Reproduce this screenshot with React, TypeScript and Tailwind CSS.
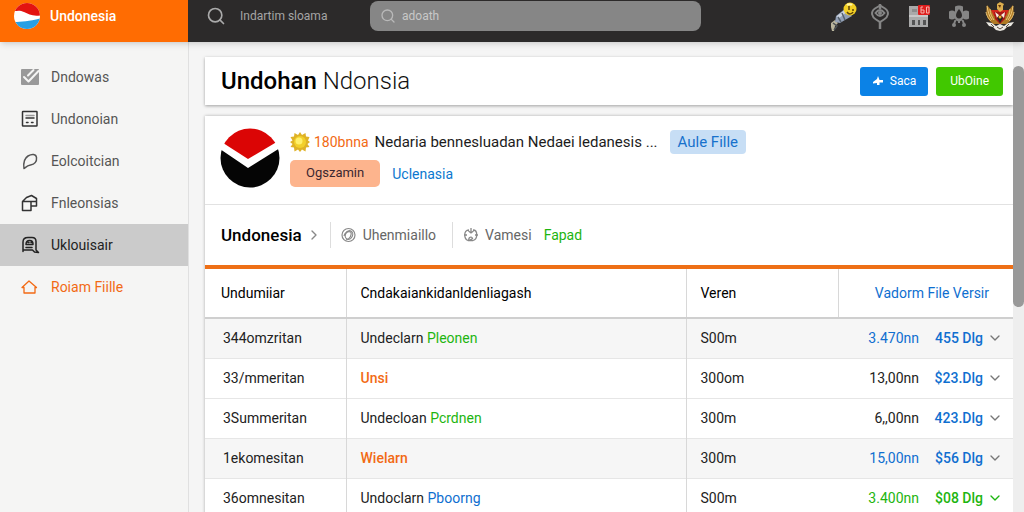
import { Search, ChevronDown, ChevronRight } from "lucide-react";

const navItems = [
  { label: "Dndowas", icon: "check" },
  { label: "Undonoian", icon: "form" },
  { label: "Eolcoitcian", icon: "leaf" },
  { label: "Fnleonsias", icon: "box" },
  { label: "Uklouisair", icon: "badge", active: true },
  { label: "Roiam Fiille", icon: "home", accent: true },
];

const rows = [
  { id: "344omzritan", name: "Undeclarn", tag: "Pleonen", tagColor: "text-[#1db510]", size: "S00m", amount: "3.470nn", amountColor: "text-[#0f6fd0]", price: "455 Dlg", shaded: true },
  { id: "33/mmeritan", name: "", tag: "Unsi", tagColor: "text-[#f26a14]", size: "300om", amount: "13,00nn", amountColor: "text-[#222]", price: "$23.Dlg" },
  { id: "3Summeritan", name: "Undecloan", tag: "Pcrdnen", tagColor: "text-[#1db510]", size: "300m", amount: "6,,00nn", amountColor: "text-[#222]", price: "423.Dlg" },
  { id: "1ekomesitan", name: "", tag: "Wielarn", tagColor: "text-[#f26a14]", size: "300m", amount: "15,00nn", amountColor: "text-[#0f6fd0]", price: "$56 Dlg", shaded: true },
  { id: "36omnesitan", name: "Undoclarn", tag: "Pboorng", tagColor: "text-[#0f6fd0]", size: "S00m", amount: "3.400nn", amountColor: "text-[#1db510]", price: "$08 Dlg", done: true },
];

function NavIcon({ name }: { name: string }) {
  return (
    <svg viewBox="0 0 20 20" className="w-5 h-5 shrink-0" fill="none" stroke="currentColor" strokeWidth="1.5" strokeLinejoin="round" strokeLinecap="round">
      {name === "check" && (
        <>
          <rect x="1" y="2" width="18" height="16" rx="1" fill="#999" stroke="none" />
          <path d="M4 10l4.500 4.500L18.500 4M8 8.500L13.500 3" stroke="#f5f5f4" strokeWidth="2" />
        </>
      )}
      {name === "form" && (
        <g stroke="#333">
          <rect x="2.500" y="2.500" width="14.500" height="14.500" rx="0.500" />
          <path d="M6 6.500h8" stroke="#999" />
          <path d="M6 9h8M6.500 13.500h1.500M11.500 13.500h1.500" />
        </g>
      )}
      {name === "leaf" && <path d="M4 17.500c-.8-5.500 0-10 4-12.500 4-2.300 8-2 8.500 1.500.5 4-2 7-6 7.500-3 .4-4 1.500-6.500 3.500z" />}
      {name === "box" && <path d="M2.500 8.500V17.500H11V13H16.500V5.500L11.500 2.500 6.500 4.500 2.500 8.500H16M11 8.500V13" stroke="#333" />}
      {name === "badge" && (
        <>
          <path d="M3 16.500V7c0-3 2-4.500 5-4.500h4c2.500 0 4 1.500 4 4v8.500l2.500 2.500-4-.5-2-2H3" />
          <path d="M6 9.500c0-3 1.500-4 3.500-4s3.500 1 3.500 3.500M6 9.500h7M6 12.500h6M8 7.500h1M11 7.500h1" />
        </>
      )}
      {name === "home" && <path d="M2 10.500L9 4l7.500 6.500H15V16H4v-5.500z" strokeWidth="1.300" />}
    </svg>
  );
}

function Flashlight() {
  return (
    <svg viewBox="0 0 30 30" className="w-[30px] h-[30px]">
      <path d="M3 22l4-3 3 3-3 3-1 5H4l-1-4z" fill="#b9b49c" />
      <path d="M5 22l4 3-3 4" fill="none" stroke="#4b5054" strokeWidth="1.500" />
      <path d="M8 15l10-8 6 8-7 4-5 3-5-1z" fill="#93a0b6" />
      <path d="M9 15l9-7 2 2-10 8z" fill="#ccd3df" />
      <path d="M14 12l3 7M10 16l3 5" stroke="#56616e" strokeWidth="1.500" />
      <circle cx="22" cy="8" r="6.500" fill="#f2cf24" />
      <path d="M19 4c1-1 4-1 5 0" stroke="#fff6a8" strokeWidth="2" fill="none" />
      <path d="M21 5v4M25 8v2M19 11c2 3 5 2 6 0" stroke="#5e4307" strokeWidth="1.500" fill="none" />
    </svg>
  );
}

function Pin() {
  return (
    <svg viewBox="0 0 20 26" className="w-5 h-[26px]" fill="none" stroke="#858585" strokeWidth="2">
      <path d="M10 2.500L5 5.500C0 9 2 14 6 16.500l4 2.500 4-2.500c4-2.500 6-7.500 1-11z" />
      <path d="M5.500 10q4.500-6 9 0-4.500 6-9 0z" />
      <circle cx="10" cy="10" r="1" fill="#858585" />
      <path d="M10 1v5M10 18v8" strokeWidth="2.500" />
    </svg>
  );
}

function Calendar() {
  return (
    <svg viewBox="0 0 24 26" className="w-6 h-[26px]">
      <path d="M1 3h19v21H1z" fill="#aaa" />
      <path d="M4 6h5v3H4z" fill="#8d8d8d" />
      <path d="M1 13h19" stroke="#c8c8c8" strokeWidth="2" />
      <path d="M4 17h3v5H4zM10 17h2v5h-2zM15 17h3v5h-3z" fill="#555" />
      <rect x="10" y="2" width="12" height="10" rx="1" fill="#df1d1d" />
      <path d="M15 4h-2v6h3V7h-3M18.500 4h2.500v6h-2.500z" fill="none" stroke="#f4b3ab" />
    </svg>
  );
}

function Cross() {
  return (
    <svg viewBox="0 0 22 26" className="w-[22px] h-[26px]" fill="#858585">
      <path d="M7 3.500q4-2 8 0v5q3-2 6 0v7q-3 2-6 0-1 3-4 3t-4-3q-3 2-6 0v-7q3-2 6 0z" />
      <path d="M11 6c4 5 4 9 0 9.500C7 15 7 11 11 6z" fill="#2c2a2a" />
      <path d="M7.500 17L6 21M14.500 17l1.500 4M11 17v3" stroke="#858585" strokeWidth="2" />
      <circle cx="6" cy="22" r="2" />
      <circle cx="16" cy="22" r="2" />
    </svg>
  );
}

function Emblem() {
  return (
    <svg viewBox="0 0 32 32" className="w-8 h-8">
      <path d="M3 5l5 6h16l5-6c1 6 1 11-2 15l-4 4H9l-4-4C2 16 2 11 3 5z" fill="#b07a25" />
      <path d="M3 6c1 6 2 10 5 14M6 9c0 5 2 8 4 11M29 6c-1 6-2 10-5 14M26 9c0 5-2 8-4 11M2 12c1 5 3 7 5 9M30 12c-1 5-3 7-5 9" stroke="#ecc97b" strokeWidth="1" fill="none" />
      <path d="M7 10h18l-3 6H10z" fill="#d3271c" />
      <path d="M13 4l3-2 4 2-1 2v4l-3 2-3-3z" fill="#dcae4e" />
      <path d="M14 5h3l-1 3z" fill="#623309" />
      <path d="M10 12h12l-1 7-5 5-5-5z" fill="#a81717" />
      <path d="M11 12l4 3-2 3zM21 12l-4 3 3 3z" fill="#f5eee0" />
      <path d="M13 18l3-3 3 3-3 5z" fill="#292321" />
      <circle cx="16" cy="17" r="1.500" fill="#f2b62f" />
      <path d="M2 22l6 1 4 3 4-2 4 2 4-3 6-1-3 4-4 1-3 3-4 1-4-1-3-3-4-1z" fill="#ece9e2" />
      <path d="M7 24l3 3M25 24l-3 3M13 27l3 2 3-2" stroke="#5b4c40" strokeWidth="1" fill="none" />
    </svg>
  );
}

function Sun() {
  return (
    <svg viewBox="0 0 20 20" className="w-5 h-5 shrink-0">
      <path
        d="M10 0l2 3 3.500-2 .5 3.500 3.500.5-1.500 3.500L20 10l-2.500 2 2 3-3.500.5-.5 4-3.500-2L10 20l-2-2.500-3.500 2L4 15.500.500 15l2-3L0 10l2.500-1.500L.5 5 4 4.500 4.500 1 8 3z"
        fill="#dfb226"
      />
      <circle cx="10" cy="10" r="6" fill="#f2d02a" />
      <circle cx="9" cy="9" r="3.500" fill="#fff06b" />
    </svg>
  );
}

function Header() {
  return (
    <header className="relative z-10 flex h-[42px] shrink-0 shadow-md">
      <a href="#" className="flex w-[188px] shrink-0 items-center gap-2 bg-[#ff6c02] pb-2.5 pl-3.5 text-sm font-medium text-white">
        <svg viewBox="0 0 28 28" className="h-7 w-7">
          <clipPath id="flag"><circle cx="13" cy="14" r="13" /></clipPath>
          <g clipPath="url(#flag)">
            <path d="M0 0h28v28H0z" fill="#fff" />
            <path d="M0 0h28v13c-9 2-13-1-18-3C6 8 3 9 0 9z" fill="#e31310" />
            <path d="M0 20c8 0 16-1 28-4v12H0z" fill="#279fe4" />
          </g>
        </svg>
        Undonesia
      </a>
      <div className="flex flex-1 items-center bg-[#2c2a2a] pb-2.5 pl-[18px] pr-2">
        <Search className="h-5 w-5 shrink-0 text-[#aaa]" strokeWidth={2} />
        <span className="ml-3.5 w-[130px] shrink-0 text-xs text-[#a5a5a5]">Indartim sloama</span>
        <label className="flex h-[30px] w-[331px] items-center gap-1.5 rounded-lg bg-[#868686] pl-2.5">
          <Search className="h-4 w-4 shrink-0 text-[#b9b9b9]" />
          <input type="text" aria-label="Search" placeholder="adoath" className="w-full bg-transparent text-xs text-[#d0d0d0] outline-none placeholder:text-[#c8c8c8]" />
        </label>
        <div className="ml-auto flex items-center">
          <button aria-label="Light" className="mr-3"><Flashlight /></button>
          <button aria-label="Location" className="mr-[18px]"><Pin /></button>
          <button aria-label="Calendar" className="mr-4"><Calendar /></button>
          <button aria-label="Services" className="mr-3.5"><Cross /></button>
          <button aria-label="Account"><Emblem /></button>
        </div>
      </div>
    </header>
  );
}

function Sidebar() {
  return (
    <nav className="w-[189px] shrink-0 border-r border-[#e0e0e0] bg-[#f5f5f4] pt-3.5">
      {navItems.map((item) => (
        <a
          key={item.label}
          href="#"
          className={`flex h-[42px] items-center gap-[11px] pl-5 text-sm ${
            item.active ? "bg-[#cbcbcb] text-[#222]" : item.accent ? "text-[#f26a14]" : "text-[#555]"
          }`}
        >
          <NavIcon name={item.icon} />
          {item.label}
        </a>
      ))}
    </nav>
  );
}

function Profile() {
  return (
    <div className="flex h-[89px] gap-2.5 border-b border-[#e2e2e2] pl-[15px] pt-3">
      <svg viewBox="0 0 60 60" className="h-[60px] w-[60px] shrink-0">
        <clipPath id="avatar"><circle cx="30" cy="30" r="29.500" /></clipPath>
        <g clipPath="url(#avatar)">
          <path d="M0 0h60v60H0z" fill="#fff" />
          <path d="M0 0h60v12L28 31 0 13z" fill="#db0505" />
          <path d="M0 21l28 19 32-20v40H0z" fill="#050505" />
        </g>
      </svg>
      <div className="flex flex-col gap-1">
        <div className="flex h-7 items-center text-[15px] text-[#1c1c1c]">
          <Sun />
          <span className="ml-1 text-sm text-[#f26a14]">180bnna</span>
          <span className="ml-1.5">Nedaria bennesluadan Nedaei ledanesis ...</span>
          <a href="#" className="ml-3 rounded-sm bg-[#c7def5] px-2 leading-6 text-[#1771cc]">Aule Fille</a>
        </div>
        <div className="flex items-center gap-3 text-sm">
          <button className="h-[27px] rounded-[5px] bg-[#fdb48d] px-4 text-[13px] text-[#3b2730]">Ogszamin</button>
          <a href="#" className="text-[#0c78cf]">Uclenasia</a>
        </div>
      </div>
    </div>
  );
}

function Crumbs() {
  return (
    <div className="flex h-[60px] items-center pl-4 text-sm text-[#666]">
      <a href="#" className="text-[17px] font-medium text-black">Undonesia</a>
      <ChevronRight className="ml-1 h-4 w-4 text-[#888]" />
      <a href="#" className="ml-2 flex h-[26px] items-center gap-1.5 border-l border-[#ddd] pl-2.5">
        <svg viewBox="0 0 16 16" className="h-4 w-4" fill="none" stroke="#888" strokeWidth="1.200">
          <circle cx="7.500" cy="8" r="6.500" />
          <ellipse cx="8" cy="8" rx="3.500" ry="4.500" transform="rotate(25 8 8)" />
          <path d="M5 13c4-1 6-5 5-8M3 9c1-4 4-5 7-4" />
        </svg>
        Uhenmiaillo
      </a>
      <a href="#" className="ml-4 flex h-[26px] items-center gap-1.5 border-l border-[#ddd] pl-2.5">
        <svg viewBox="0 0 16 16" className="h-4 w-4" fill="none" stroke="#888" strokeWidth="1.300">
          <path d="M6 3C0 3 1 12 5 13.500h5C15 12 15 3 10 3M8 1v5M5.500 4L8 6l2.500-2M1 8h3M12 8h3M6 13.500C5 10 9 9 9.500 11.500L7 13" />
        </svg>
        Vamesi
      </a>
      <a href="#" className="ml-3 text-[#1db510]">Fapad</a>
    </div>
  );
}

function FileTable() {
  return (
    <table className="w-full table-fixed border-t-4 border-[#ee6f16] text-left text-sm text-[#222]">
      <colgroup>
        <col className="w-[141px]" />
        <col />
        <col className="w-[152px]" />
        <col className="w-[175px]" />
      </colgroup>
      <thead>
        <tr className="h-[51px] border-b-2 border-[#cfcfcf] text-black">
          <th className="border-r border-[#d8d8d8] pl-4 font-normal">Undumiiar</th>
          <th className="border-r border-[#d8d8d8] pl-3.5 font-normal">Cndakaiankidanldenliagash</th>
          <th className="border-r border-[#d8d8d8] pl-3.5 font-normal">Veren</th>
          <th className="pr-6 text-right font-normal text-[#0f6fd0]">Vadorm File Versir</th>
        </tr>
      </thead>
      <tbody>
        {rows.map((row) => (
          <tr key={row.id} className={`h-10 border-b border-[#e6e6e6] ${row.shaded ? "bg-[#f6f6f6]" : "bg-white"}`}>
            <td className="border-r border-[#d8d8d8] pl-[18px]">{row.id}</td>
            <td className="border-r border-[#d8d8d8] pl-3.5">
              {row.name} <span className={row.name ? row.tagColor : `font-medium ${row.tagColor}`}>{row.tag}</span>
            </td>
            <td className="pl-3.5">{row.size}</td>
            <td>
              <div className="flex items-center justify-end pr-2.5">
                <span className={row.amountColor}>{row.amount}</span>
                <span className={`w-16 text-right font-medium ${row.done ? "text-[#1db510]" : "text-[#0f6fd0]"}`}>{row.price}</span>
                <button aria-label={`Expand ${row.id}`} className="ml-1">
                  <ChevronDown className={`h-4 w-4 ${row.done ? "text-[#1db510]" : "text-[#777]"}`} />
                </button>
              </div>
            </td>
          </tr>
        ))}
      </tbody>
    </table>
  );
}

export default function App() {
  return (
    <div className="flex h-screen flex-col overflow-hidden bg-[#f5f5f5] font-['Roboto',sans-serif]">
      <Header />
      <div className="flex min-h-0 flex-1">
        <Sidebar />
        <main className="flex min-w-0 flex-1 flex-col gap-[11px] overflow-hidden pl-4 pt-[15px]">
          <div className="flex h-12 shrink-0 items-center bg-white pl-4 pr-2.5 shadow-[0_1px_3px_rgba(0,0,0,0.35)]">
            <h1 className="text-2xl font-light text-[#111]">
              <span className="font-medium text-black">Undohan</span> Ndonsia
            </h1>
            <div className="ml-auto flex gap-2 text-xs text-white">
              <button className="flex h-[29px] items-center gap-1.5 rounded-[3px] bg-[#0b82e6] px-3">
                <svg viewBox="0 0 12 12" className="h-3 w-3" fill="currentColor">
                  <path d="M6 1l1.500 4H11v2.500H7.500V10H5V8L1 8.500V7l4-3z" />
                </svg>
                Saca
              </button>
              <button className="h-[29px] rounded-[3px] bg-[#41c800] px-3.5">UbOine</button>
            </div>
          </div>
          <section className="shrink-0 bg-white shadow-[0_0_3px_rgba(0,0,0,0.3)]">
            <Profile />
            <Crumbs />
            <FileTable />
          </section>
        </main>
        <div className="w-[11px] shrink-0 bg-[#eee] pt-6">
          <div className="h-[54%] rounded-md bg-[#999]" />
        </div>
      </div>
    </div>
  );
}
